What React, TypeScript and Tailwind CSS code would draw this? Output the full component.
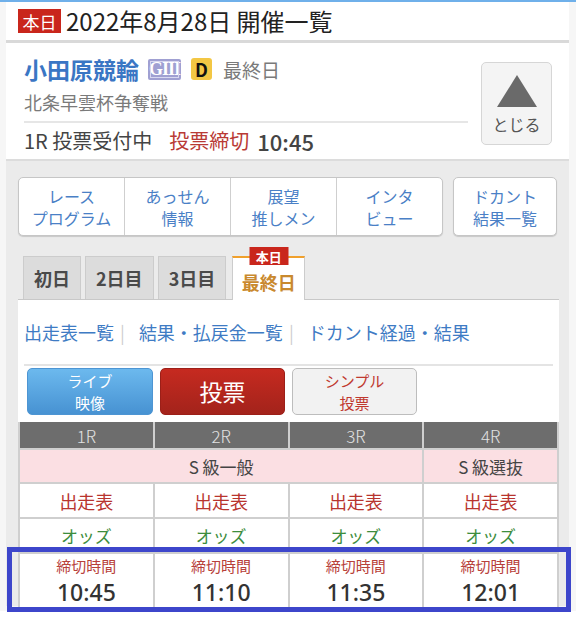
import React from "react";

const FONT = { fontFamily: '"Noto Sans CJK JP", "Noto Sans", sans-serif' };

const NAV = [
  ["レース", "プログラム"],
  ["あっせん", "情報"],
  ["展望", "推しメン"],
  ["インタ", "ビュー"],
];

const TABS = ["初日", "2日目", "3日目"];

const RACES = [
  { r: "1R", t: "10:45" },
  { r: "2R", t: "11:10" },
  { r: "3R", t: "11:35" },
  { r: "4R", t: "12:01" },
];

export default function App() {
  return (
    <div className="relative w-[576px] h-[629px] overflow-hidden bg-white" style={FONT}>
      <div className="h-[611px] bg-[#f6f6f6] border-t-2 border-[#6fb0ea]">
        <div className="ml-[6px] w-[563px]">
          {/* header */}
          <div className="flex h-[41px] items-center gap-[5px] border-b-[3px] border-[#d9d9d9] bg-white pl-[12px]">
            <span className="flex h-[24px] w-[43px] items-center justify-center bg-[#c9261c] text-[17px] leading-none text-white">
              本日
            </span>
            <span className="text-[24px] leading-none text-[#222]">2022年8月28日 開催一覧</span>
          </div>

          {/* card */}
          <div className="flex h-[118px] border-b-2 border-[#dcdcdc] bg-white pl-[18px] pr-[17px]">
            <div className="flex-1 pr-[13px]">
              <div className="mt-[13px] flex h-[26px] items-center">
                <span className="text-[23px] font-bold leading-none text-[#3a76c4]">小田原競輪</span>
                <span
                  className="ml-[9px] flex h-[21px] w-[33px] items-center justify-center rounded-[2px] bg-[#a0a0d2] text-[18px] font-bold leading-none tracking-[-1px] text-white outline outline-1 -outline-offset-[3px] outline-[#d8d8f0]"
                  style={{ fontFamily: '"Liberation Serif", serif' }}
                >
                  GIII
                </span>
                <span className="ml-[10px] flex h-[22px] w-[21px] items-center justify-center rounded-[3px] bg-[#f3c744] text-[18px] font-bold leading-none text-[#111]">
                  D
                </span>
                <span className="ml-[11px] text-[19px] leading-none text-[#7a7a7a]">最終日</span>
              </div>
              <div className="mt-[9px] text-[18px] leading-[22px] text-[#7a7a7a]">北条早雲杯争奪戦</div>
              <div className="mt-[8px] h-[2px] bg-[#e6e6e6]" />
              <div className="mt-[6px] flex items-center text-[20px] leading-[24px] text-[#444]">
                <span>1R 投票受付中</span>
                <span className="ml-[17px] text-[#b93a35]">投票締切</span>
                <span className="ml-[8px] text-[22px] font-medium">10:45</span>
              </div>
            </div>
            <div className="mt-[19px] flex h-[83px] w-[71px] flex-col items-center rounded-[5px] border border-[#d6d6d6] bg-[#f4f4f4]">
              <svg width="40" height="32" viewBox="0 0 40 32" className="mt-[12px]">
                <polygon points="20,0 40,32 0,32" fill="#6a6a6a" />
              </svg>
              <span className="mt-[9px] text-[16px] leading-none text-[#555]">とじる</span>
            </div>
          </div>

          {/* gray panel */}
          <div className="h-[445px] bg-[#ebebeb] pl-[12px] pr-[10px] pt-[16px]">
            <div className="flex h-[59px] gap-[10px]">
              <div className="flex w-[425px] rounded-[5px] border border-[#c6c6c6] bg-white shadow-[0_1px_1px_rgba(0,0,0,0.15)]">
                {NAV.map((n, i) => (
                  <div
                    key={i}
                    className={`flex flex-1 flex-col items-center justify-center text-[16px] leading-[22px] text-[#4a80c6] ${
                      i > 0 ? "border-l border-[#cfcfcf]" : ""
                    }`}
                  >
                    <span>{n[0]}</span>
                    <span>{n[1]}</span>
                  </div>
                ))}
              </div>
              <div className="flex w-[104px] flex-col items-center justify-center rounded-[5px] border border-[#c6c6c6] bg-white text-[16px] leading-[22px] text-[#4a80c6] shadow-[0_1px_1px_rgba(0,0,0,0.15)]">
                <span>ドカント</span>
                <span>結果一覧</span>
              </div>
            </div>

            {/* tabs */}
            <div className="mt-[20px] flex h-[44px] items-end gap-[4px] border-b border-[#c8c8c8] pl-[5px]">
              {TABS.map((t) => (
                <div
                  key={t}
                  className="flex h-[43px] items-center justify-center border border-b-0 border-[#cccccc] bg-[#dcdcdc] px-[10px] text-[18px] font-bold leading-none text-[#4a4a4a]"
                >
                  {t}
                </div>
              ))}
              <div className="relative ml-[2px] -mb-px flex h-[44px] w-[73px] items-center justify-center border border-b-0 border-t-2 border-[#cccccc] border-t-[#f0a02c] bg-white text-[18px] font-bold leading-none text-[#c9892e]">
                <span className="mt-[6px]">最終日</span>
                <span className="absolute -top-[11px] left-1/2 flex h-[18px] w-[39px] -translate-x-1/2 items-center justify-center bg-[#c9261c] text-[13px] leading-none text-white">
                  本日
                </span>
              </div>
            </div>

            {/* white content */}
            <div className="bg-white">
              <div className="flex h-[64px] items-center pl-[6px] pr-[6px] text-[18px] leading-none text-[#3e7bc4]">
                <span>出走表一覧</span>
                <span className="ml-[6px] mr-[14px] text-[#cfcfcf]">|</span>
                <span>結果・払戻金一覧</span>
                <span className="ml-[6px] mr-[14px] text-[#cfcfcf]">|</span>
                <span>ドカント経過・結果</span>
              </div>
              <div className="mx-[6px] h-[2px] bg-[#e4e4e4]" />
              <div className="flex h-[56px] gap-[7px] pl-[9px] pt-[2px]">
                <div className="flex h-[47px] w-[126px] flex-col items-center justify-center rounded-[5px] border border-[#4d95d3] bg-gradient-to-b from-[#6cb9ee] to-[#4792d2] text-[15px] leading-[22px] text-white">
                  <span>ライブ</span>
                  <span>映像</span>
                </div>
                <div className="flex h-[47px] w-[125px] items-center justify-center rounded-[5px] border border-[#9c1f18] bg-gradient-to-b from-[#c62a20] to-[#a3231b] text-[23px] leading-none text-white">
                  投票
                </div>
                <div className="flex h-[47px] w-[125px] flex-col items-center justify-center rounded-[5px] border border-[#bdbdbd] bg-[#f2f2f2] text-[15px] leading-[22px] text-[#c0392f]">
                  <span>シンプル</span>
                  <span>投票</span>
                </div>
              </div>

              {/* table */}
              <div className="grid grid-cols-4 gap-[2px] border-x-2 border-b-2 border-[#cfcfcf] bg-[#cfcfcf]">
                {RACES.map((x) => (
                  <div key={x.r} className="flex h-[26px] items-center justify-center bg-[#6d6d6d] text-[17px] font-light leading-none text-[#e2e2e2]">
                    {x.r}
                  </div>
                ))}
                <div className="col-span-3 flex h-[32px] items-center justify-center bg-[#fbdfe3] text-[17px] leading-none text-[#444]">
                  S 級一般
                </div>
                <div className="flex h-[32px] items-center justify-center bg-[#fbdfe3] text-[17px] leading-none text-[#444]">
                  S 級選抜
                </div>
                {RACES.map((x) => (
                  <div key={x.r + "a"} className="flex h-[33px] items-center justify-center bg-white text-[18px] leading-none text-[#b8342e]">
                    出走表
                  </div>
                ))}
                {RACES.map((x) => (
                  <div key={x.r + "b"} className="flex h-[33px] items-center justify-center bg-white text-[17px] leading-none text-[#3d8d3d]">
                    オッズ
                  </div>
                ))}
                {RACES.map((x) => (
                  <div key={x.r + "c"} className="flex h-[54px] flex-col items-center justify-center bg-white">
                    <span className="text-[15px] leading-[22px] text-[#b8413a]">締切時間</span>
                    <span
                      className="text-[23px] font-medium leading-[31px] text-[#333]"
                      style={{ fontFamily: '"Noto Sans", sans-serif' }}
                    >
                      {x.t}
                    </span>
                  </div>
                ))}
              </div>
            </div>
          </div>
        </div>
      </div>

      {/* highlight overlay */}
      <div className="absolute left-[7px] top-[547px] h-[65px] w-[564px] border-[5px] border-[#3d46cb]" />
    </div>
  );
}
